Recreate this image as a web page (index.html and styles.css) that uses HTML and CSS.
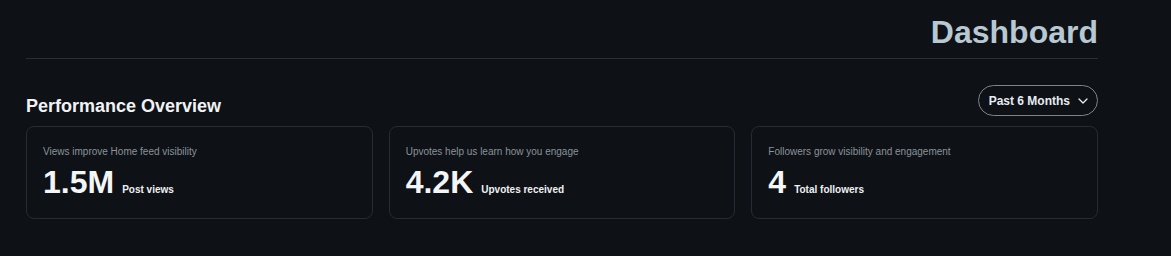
FILE: index.html
```html
<!DOCTYPE html>
<html lang="en">
<head>
<meta charset="utf-8">
<title>Dashboard</title>
<link rel="stylesheet" href="styles.css">
</head>
<body>
<main class="page">
  <header class="page-header">
    <h1 class="page-title">Dashboard</h1>
  </header>
  <section class="overview">
    <div class="overview-head">
      <h2 class="overview-title">Performance Overview</h2>
      <button class="range-btn" type="button">
        <span>Past 6 Months</span>
        <svg class="chev" width="10" height="6" viewBox="0 0 10 6" aria-hidden="true"><path d="M1 1l4 4 4-4" fill="none" stroke="currentColor" stroke-width="1.3" stroke-linecap="round" stroke-linejoin="round"/></svg>
      </button>
    </div>
    <div class="cards">
      <div class="card">
        <p class="card-hint">Views improve Home feed visibility</p>
        <div class="card-stat"><span class="card-num">1.5M</span><span class="card-label">Post views</span></div>
      </div>
      <div class="card">
        <p class="card-hint">Upvotes help us learn how you engage</p>
        <div class="card-stat"><span class="card-num">4.2K</span><span class="card-label">Upvotes received</span></div>
      </div>
      <div class="card">
        <p class="card-hint">Followers grow visibility and engagement</p>
        <div class="card-stat"><span class="card-num">4</span><span class="card-label">Total followers</span></div>
      </div>
    </div>
  </section>
</main>
</body>
</html>
```
FILE: styles.css
```css
* { box-sizing: border-box; }
html, body {
  margin: 0;
  background: #0e1115;
  font-family: "Liberation Sans", Arial, sans-serif;
  color: #e6edf3;
}
.page {
  width: 1072px;
  margin-left: 26px;
  padding-top: 12px;
}
.page-header {
  display: flex;
  justify-content: flex-end;
  padding-bottom: 6px;
  border-bottom: 1px solid #2a2f35;
}
.page-title {
  margin: 0;
  font-size: 32px;
  line-height: 40px;
  font-weight: 700;
  color: #b8c8d2;
}
.overview { margin-top: 26px; }
.overview-head {
  display: flex;
  justify-content: space-between;
  align-items: flex-end;
  margin-bottom: 10px;
}
.overview-title {
  margin: 0;
  font-size: 18px;
  line-height: 20px;
  font-weight: 700;
  color: #f0f3f6;
}
.range-btn {
  display: flex;
  align-items: center;
  gap: 8px;
  height: 31px;
  padding: 0 9px 0 10px;
  border: 1px solid #7d848c;
  border-radius: 999px;
  background: transparent;
  color: #e6edf3;
  font-family: "Liberation Sans", Arial, sans-serif;
  font-size: 12px;
  font-weight: 700;
}
.chev { display: block; }
.cards {
  display: grid;
  grid-template-columns: repeat(3, 1fr);
  gap: 16px;
}
.card {
  border: 1px solid #272c32;
  border-radius: 8px;
  padding: 17px 16px 18px;
}
.card-hint {
  margin: 0;
  font-size: 10px;
  line-height: 15px;
  color: #8a939c;
}
.card-stat {
  display: flex;
  align-items: baseline;
  gap: 8px;
  margin-top: 5px;
}
.card-num {
  font-size: 32px;
  line-height: 36px;
  font-weight: 700;
  color: #f3f5f7;
}
.card-label {
  font-size: 10px;
  line-height: 12px;
  font-weight: 700;
  color: #eef1f4;
}
```
